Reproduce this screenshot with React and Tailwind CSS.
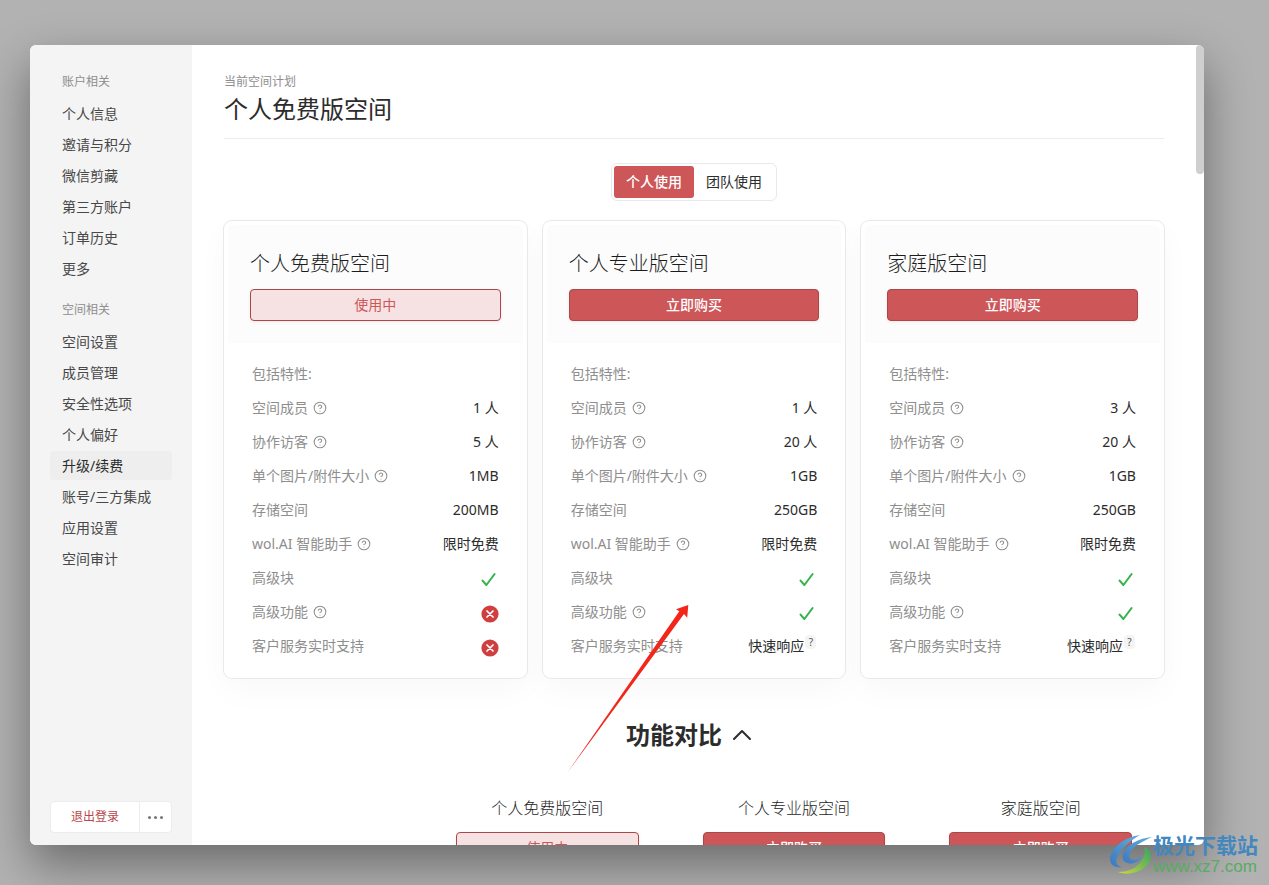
import React, { useState } from 'react';
import { ChevronUp, CircleHelp } from 'lucide-react';

const navGroups = [
  {
    title: '账户相关',
    items: ['个人信息', '邀请与积分', '微信剪藏', '第三方账户', '订单历史', '更多']
  },
  {
    title: '空间相关',
    items: ['空间设置', '成员管理', '安全性选项', '个人偏好', '升级/续费', '账号/三方集成', '应用设置', '空间审计']
  }
];

const features = [
  { key: 'members', label: '空间成员', help: true },
  { key: 'guests', label: '协作访客', help: true },
  { key: 'fileSize', label: '单个图片/附件大小', help: true },
  { key: 'storage', label: '存储空间' },
  { key: 'ai', label: 'wol.AI 智能助手', help: true },
  { key: 'blocks', label: '高级块' },
  { key: 'advanced', label: '高级功能', help: true },
  { key: 'support', label: '客户服务实时支持' }
];

const plans = [
  {
    name: '个人免费版空间',
    current: true,
    values: { members: '1 人', guests: '5 人', fileSize: '1MB', storage: '200MB', ai: '限时免费', blocks: true, advanced: false, support: false }
  },
  {
    name: '个人专业版空间',
    values: { members: '1 人', guests: '20 人', fileSize: '1GB', storage: '250GB', ai: '限时免费', blocks: true, advanced: true, support: '快速响应' }
  },
  {
    name: '家庭版空间',
    values: { members: '3 人', guests: '20 人', fileSize: '1GB', storage: '250GB', ai: '限时免费', blocks: true, advanced: true, support: '快速响应' }
  }
];

const CheckMark = () => (
  <svg viewBox="0 0 18 18" className="mt-1 h-[18px] w-[18px]" fill="none" stroke="#34b24c" strokeWidth="2" strokeLinecap="round" strokeLinejoin="round">
    <path d="M1.5 9.6 5.4 14 13.6 3" />
  </svg>
);

const CrossMark = () => (
  <svg viewBox="0 0 18 18" className="mt-1 h-[18px] w-[18px]">
    <circle cx="9" cy="9" r="8.6" fill="#d03f40" />
    <path d="m6 6 6 6M12 6l-6 6" stroke="#fff" strokeWidth="1.7" strokeLinecap="round" />
  </svg>
);

const FeatureValue = ({ feature, value }) => {
  if (value === true) return <CheckMark />;
  if (value === false) return <CrossMark />;

  return (
    <>
      {value}
      {feature.key === 'support' && (
        <sup className="relative -top-1 mr-px ml-px w-[11px] self-center rounded-sm bg-[#f4f4f4] text-center text-[10px] leading-[14px] text-[#555]">?</sup>
      )}
    </>
  );
};

const PlanButton = ({ current }) => (
  <button
    type="button"
    className={`h-8 w-full rounded border border-[#a8484b] text-sm leading-5 shadow-[0_1px_3px_rgba(205,86,89,0.15)] ${
      current ? 'bg-[#f7e2e3] font-normal text-[#cd5659]' : 'bg-[#cd5659] font-medium text-white'
    }`}
  >
    {current ? '使用中' : '立即购买'}
  </button>
);

const PlanCard = ({ plan }) => (
  <section className="rounded-lg bg-white p-1 shadow-[0_12px_32px_rgba(0,0,0,0.03)] ring-1 ring-[#e9e9e9]">
    <div className="rounded-t-md bg-[#fcfcfc] px-[22px] pt-[25px] pb-[22px]">
      <h2 className="mb-[11px] text-xl leading-7 font-light text-[#1c1c1c]">{plan.name}</h2>
      <PlanButton current={plan.current} />
    </div>
    <div className="px-6 pt-[14px] pb-[11px] text-sm text-[#8e8e8e]">
      <p className="flex h-[34px] items-center">包括特性:</p>
      <dl>
        {features.map((feature) => (
          <div key={feature.key} className="flex h-[34px] items-center justify-between">
            <dt className="flex items-center gap-[5px]">
              {feature.label}
              {feature.help && <CircleHelp size={14} strokeWidth={1.8} />}
            </dt>
            <dd className="flex items-center text-[#2c2c2c]">
              <FeatureValue feature={feature} value={plan.values[feature.key]} />
            </dd>
          </div>
        ))}
      </dl>
    </div>
  </section>
);

const Sidebar = () => {
  const [active, setActive] = useState('升级/续费');

  return (
    <aside className="flex w-[162px] shrink-0 flex-col justify-between bg-[#f4f4f4] px-5 pt-[27px] pb-3">
      <nav className="flex flex-col gap-[17px]">
        {navGroups.map((group) => (
          <div key={group.title}>
            <h3 className="mb-[7px] px-3 text-xs leading-5 text-[#8e8e8e]">{group.title}</h3>
            <ul className="flex flex-col gap-[2px]">
              {group.items.map((item) => (
                <li key={item}>
                  <a
                    href="#"
                    onClick={(e) => {
                      e.preventDefault();
                      setActive(item);
                    }}
                    className={`flex h-[29px] items-center rounded px-3 text-sm whitespace-nowrap ${
                      active === item ? 'bg-[#eeeeee] text-[#2c2c2c]' : 'text-[#484848]'
                    }`}
                  >
                    {item}
                  </a>
                </li>
              ))}
            </ul>
          </div>
        ))}
      </nav>

      <div className="flex h-8 divide-x divide-[#ececec] rounded-sm border border-[#ececec] bg-white">
        <button type="button" className="flex-1 text-xs text-[#b9474b]">退出登录</button>
        <button type="button" aria-label="更多" className="flex w-[31px] items-center justify-center gap-[3px]">
          <span className="h-[3px] w-[3px] rounded-full bg-[#777]" />
          <span className="h-[3px] w-[3px] rounded-full bg-[#777]" />
          <span className="h-[3px] w-[3px] rounded-full bg-[#777]" />
        </button>
      </div>
    </aside>
  );
};

const UsageTabs = () => {
  const [usage, setUsage] = useState('个人使用');

  return (
    <div className="mx-auto mt-6 flex w-fit rounded-md border border-[#e9e9e9] p-[2px]">
      {['个人使用', '团队使用'].map((tab) => (
        <button
          key={tab}
          type="button"
          onClick={() => setUsage(tab)}
          className={`h-8 w-20 rounded-[3px] text-sm ${
            usage === tab ? 'bg-[#cd5659] font-medium text-white' : 'text-[#2c2c2c]'
          }`}
        >
          {tab}
        </button>
      ))}
    </div>
  );
};

// Hand-drawn style pointer laid over the plan cards
const PointerArrow = () => (
  <svg viewBox="0 0 124 170" className="pointer-events-none absolute top-[604px] left-[566px] h-[170px] w-[124px]">
    <path d="M1.5 168.5 113.3 7.3 110 5.3 122.3 1 121.2 13.8 118 10Z" fill="#f3261a" />
  </svg>
);

const Watermark = () => (
  <div className="pointer-events-none absolute right-[11px] bottom-[7px] flex items-start">
    <svg viewBox="0 0 44 42" className="h-[42px] w-11">
      <defs>
        <linearGradient id="swirl" x1="0" y1="0.9" x2="1" y2="0.1">
          <stop offset="0" stopColor="#c9d83c" />
          <stop offset="0.4" stopColor="#8cc34c" />
          <stop offset="1" stopColor="#3ea566" />
        </linearGradient>
        <linearGradient id="sweep" x1="0" y1="1" x2="1" y2="0">
          <stop offset="0" stopColor="#3c78bd" />
          <stop offset="1" stopColor="#5fb0e0" />
        </linearGradient>
      </defs>
      <path d="M31 1C16 3 2 13 1 25c0 6 5 9 12 8-5-1-7-5-5-9C11 15 21 7 31 1Z" fill="url(#sweep)" />
      <path d="M43 3C30 4 17 11 14 20c-2 7 4 11 11 9 4-1 7-4 8-8-3 4-8 6-11 4-4-3-1-9 6-14 5-3 10-6 15-8Z" fill="url(#sweep)" />
      <path d="M35 13c10 3 9 15 0 21-8 6-18 7-26 4 9 0 17-3 22-9 4-5 6-10 4-16Z" fill="url(#swirl)" />
    </svg>
    <div className="whitespace-nowrap">
      <div className="text-[21px] leading-[22px] font-bold text-[#4387bf]">极光下载站</div>
      <div className="font-['Liberation_Sans'] text-[17px] leading-[22px] text-[#58ab62]">www.xz7.com</div>
    </div>
  </div>
);

const App = () => {
  return (
    <div className="relative flex h-screen overflow-hidden bg-[#b2b2b2] pt-[45px] pr-[65px] pb-10 pl-[30px] font-['Noto_Sans','Noto_Sans_CJK_SC',sans-serif] text-[#2c2c2c]">
      <div className="flex min-w-0 flex-1 overflow-hidden rounded-md bg-white shadow-[0_20px_48px_rgba(0,0,0,0.4)]">
        <Sidebar />

        <main className="min-w-0 flex-1 overflow-hidden pt-[27px] pr-8 pl-8">
          <header className="border-b border-[#ececec] pb-3">
            <p className="text-xs leading-5 text-[#8e8e8e]">当前空间计划</p>
            <h1 className="text-2xl leading-[34px]">个人免费版空间</h1>
          </header>

          <UsageTabs />

          <div className="mt-5 grid grid-cols-3 gap-4">
            {plans.map((plan) => (
              <PlanCard key={plan.name} plan={plan} />
            ))}
          </div>

          <h2 className="mt-[39px]">
            <button type="button" className="mx-auto flex items-center gap-1 pr-1 text-2xl leading-9 font-bold">
              功能对比
              <ChevronUp size={32} strokeWidth={1.5} />
            </button>
          </h2>

          <table className="mt-[43px] w-full table-fixed">
            <thead>
              <tr>
                <td className="w-[200px]" />
                {plans.map((plan) => (
                  <th key={plan.name} scope="col" className="px-8 text-base leading-6 font-light text-[#1c1c1c]">
                    <div className="mb-3">{plan.name}</div>
                    <PlanButton current={plan.current} />
                  </th>
                ))}
              </tr>
            </thead>
          </table>
        </main>

        <div className="w-2 shrink-0">
          <div className="h-[129px] rounded-full bg-[#cfcfcf]" />
        </div>
      </div>

      <PointerArrow />
      <Watermark />
    </div>
  );
};

export default App;
